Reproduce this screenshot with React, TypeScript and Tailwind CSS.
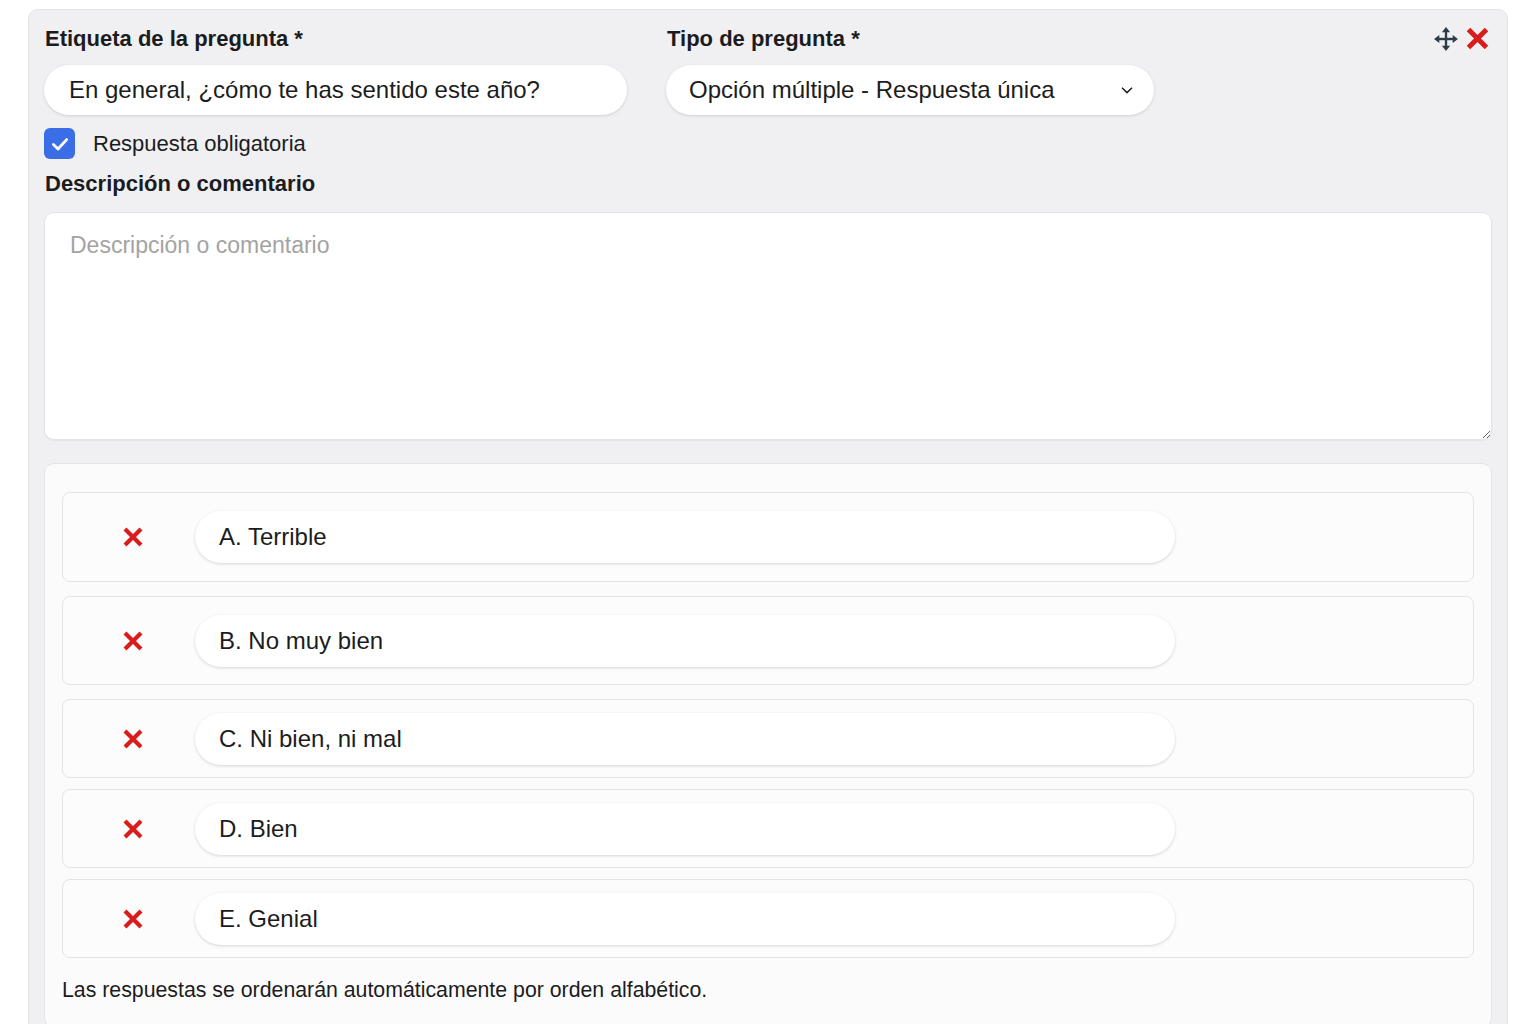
import React from "react";

const font = { fontFamily: '"Liberation Sans", Arial, sans-serif' };

function MoveIcon() {
  return (
    <svg width="26" height="26" viewBox="0 0 24 24" fill="#2f3a4a">
      <rect x="10.9" y="4" width="2.2" height="16" />
      <rect x="4" y="10.9" width="16" height="2.2" />
      <polygon points="12,1 8.2,5.8 15.8,5.8" />
      <polygon points="12,23 8.2,18.2 15.8,18.2" />
      <polygon points="1,12 5.8,8.2 5.8,15.8" />
      <polygon points="23,12 18.2,8.2 18.2,15.8" />
    </svg>
  );
}

function RedX({ size = 24, w = 4.2 }: { size?: number; w?: number }) {
  return (
    <svg width={size} height={size} viewBox="0 0 24 24" fill="none">
      <path d="M4 4 L20 20 M20 4 L4 20" stroke="#d91c1c" strokeWidth={w} strokeLinecap="butt" />
    </svg>
  );
}

const answers = [
  { label: "A. Terrible", cls: "h-[90px]" },
  { label: "B. No muy bien", cls: "h-[89px] mt-[14px]" },
  { label: "C. Ni bien, ni mal", cls: "h-[79px] mt-[14px]" },
  { label: "D. Bien", cls: "h-[79px] mt-[11px]" },
  { label: "E. Genial", cls: "h-[79px] mt-[11px]" },
];

export default function App() {
  return (
    <div className="w-full h-[1024px] bg-white overflow-hidden text-[#1c1c1e]" style={font}>
      <div className="ml-[28px] mt-[9px] w-[1480px] rounded-[10px] border border-[#e2e2e6] bg-[#f0f0f2] px-[15px] pt-[14px] pb-6">
        {/* question label + type */}
        <div className="flex items-start">
          <div className="w-[583px]">
            <div className="text-[22px] font-bold leading-[30px] pl-[1px]">Etiqueta de la pregunta *</div>
            <div className="mt-[11px] h-[50px] rounded-full bg-white shadow-[0_1px_3px_rgba(0,0,0,0.14)] flex items-center pl-[25px] text-[24px]">
              En general, ¿cómo te has sentido este año?
            </div>
          </div>
          <div className="ml-[39px] w-[488px]">
            <div className="text-[22px] font-bold leading-[30px] pl-[1px]">Tipo de pregunta *</div>
            <div className="mt-[11px] h-[50px] rounded-full bg-white shadow-[0_1px_3px_rgba(0,0,0,0.14)] flex items-center pl-[23px] pr-[20px] text-[24px]">
              <span className="flex-1">Opción múltiple - Respuesta única</span>
              <svg width="14" height="14" viewBox="0 0 14 14" fill="none">
                <path d="M2 4.8 L7 9.6 L12 4.8" stroke="#222" strokeWidth="1.5" />
              </svg>
            </div>
          </div>
          <div className="ml-auto flex items-center gap-[5px] mt-[1px] mr-[1px]">
            <MoveIcon />
            <RedX size={27} w={4.4} />
          </div>
        </div>

        {/* required checkbox */}
        <div className="mt-[12px] flex items-center">
          <div className="w-[31px] h-[31px] rounded-[6px] bg-[#3b6ee6] flex items-center justify-center">
            <svg width="22" height="22" viewBox="0 0 20 20" fill="none">
              <path d="M4 10.5 L8.2 14.5 L16 6" stroke="white" strokeWidth="2.6" strokeLinecap="round" strokeLinejoin="round" />
            </svg>
          </div>
          <span className="ml-[18px] text-[22px]">Respuesta obligatoria</span>
        </div>

        <div className="mt-[9px] text-[22px] font-bold leading-[30px] pl-[1px]">Descripción o comentario</div>

        <textarea
          className="mt-[13px] block w-full h-[228px] rounded-[10px] border border-[#e4e4e7] bg-white px-[25px] pt-[15px] pb-[17px] text-[23px] placeholder:text-[#a3a3a3] outline-none shadow-[0_1px_2px_rgba(0,0,0,0.06)]"
          style={font}
          placeholder="Descripción o comentario"
        />

        {/* answers */}
        <div className="mt-[23px] rounded-[10px] border border-[#e4e4e7] bg-[#fbfbfb] px-[17px] pt-[28px] pb-[20px]">
          {answers.map((a) => (
            <div
              key={a.label}
              className={`flex items-center rounded-[8px] border border-[#e4e4e7] bg-[#fcfcfc] ${a.cls}`}
            >
              <div className="w-[140px] flex justify-center">
                <RedX size={24} />
              </div>
              <div className="-ml-[8px] w-[980px] h-[52px] rounded-full bg-white shadow-[0_1px_3px_rgba(0,0,0,0.16)] flex items-center pl-[24px] text-[24px]">
                {a.label}
              </div>
            </div>
          ))}
          <div className="mt-[17px] text-[21.3px]">Las respuestas se ordenarán automáticamente por orden alfabético.</div>
        </div>
      </div>
    </div>
  );
}
